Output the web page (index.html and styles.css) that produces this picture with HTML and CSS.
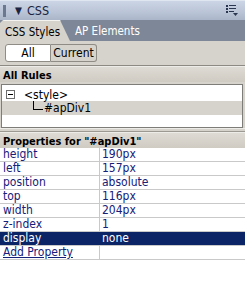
FILE: index.html
```html
<!DOCTYPE html>
<html>
<head>
<meta charset="utf-8">
<link rel="stylesheet" href="styles.css">
</head>
<body>
<div class="panel">
  <div class="titlebar">
    <span class="grip"></span>
    <span class="arrow">▼</span>
    <span class="title">CSS</span>
    <svg class="menu" width="12" height="11" viewBox="0 0 12 11">
      <rect x="0" y="0" width="2" height="2" fill="#2a3550"/>
      <rect x="3" y="0" width="7" height="1" fill="#2a3550"/>
      <rect x="0" y="3" width="2" height="2" fill="#2a3550"/>
      <rect x="3" y="3" width="7" height="1" fill="#2a3550"/>
      <rect x="0" y="6" width="2" height="2" fill="#2a3550"/>
      <rect x="3" y="6" width="5" height="1" fill="#2a3550"/>
      <path d="M7 8 L12 8 L9.5 11 Z" fill="#2a3550"/>
    </svg>
  </div>
  <div class="tabs">
    <div class="tab active">CSS Styles</div>
    <div class="tab">AP Elements</div>
  </div>
  <div class="toolbar">
    <div class="seg">
      <span class="btn on">All</span>
      <span class="btn">Current</span>
    </div>
  </div>
  <div class="header">All Rules</div>
  <div class="treewrap">
    <div class="tree">
      <div class="node">
        <span class="minus"></span>
        <span class="label">&lt;style&gt;</span>
      </div>
      <div class="node child">
        <span class="elbow"></span>
        <span class="label">#apDiv1</span>
      </div>
    </div>
  </div>
  <div class="sep"></div>
  <div class="header props">Properties for "#apDiv1"</div>
  <div class="rows">
    <div class="row"><span class="k">height</span><span class="v">190px</span></div>
    <div class="row"><span class="k">left</span><span class="v">157px</span></div>
    <div class="row"><span class="k">position</span><span class="v">absolute</span></div>
    <div class="row"><span class="k">top</span><span class="v">116px</span></div>
    <div class="row"><span class="k">width</span><span class="v">204px</span></div>
    <div class="row"><span class="k">z-index</span><span class="v">1</span></div>
    <div class="row sel"><span class="k">display</span><span class="v">none</span></div>
    <div class="row"><span class="k add">Add Property</span><span class="v"></span></div>
  </div>
</div>
</body>
</html>
```
FILE: styles.css
```css
html, body {
  margin: 0;
  padding: 0;
  background: #ffffff;
}
body {
  font-family: "DejaVu Sans Condensed", "DejaVu Sans", sans-serif;
  font-stretch: condensed;
  font-size: 11px;
  width: 245px;
  height: 284px;
  overflow: hidden;
}
.panel {
  display: flex;
  flex-direction: column;
}
.titlebar {
  height: 20px;
  box-sizing: border-box;
  border-top: 1px solid #dfe6f0;
  background: linear-gradient(#cbd5e5, #b9c4d6 60%, #aab5c9);
  display: flex;
  align-items: center;
  padding-left: 3px;
  color: #1b2440;
}
.grip {
  width: 3px;
  height: 12px;
  margin-right: 9px;
  background-image: radial-gradient(circle, #6c7890 0.8px, transparent 1px);
  background-size: 2px 2px;
}
.arrow {
  font-size: 10px;
  margin-right: 5px;
  font-family: "DejaVu Sans", sans-serif;
}
.title {
  font-size: 12.5px;
  flex: 1;
}
.menu {
  margin-right: 7px;
}
.tabs {
  height: 21px;
  background: #7d8797;
  display: flex;
  align-items: flex-end;
}
.tab {
  height: 21px;
  box-sizing: border-box;
  padding: 4px 0 0 5px;
  font-size: 11.5px;
  color: #ffffff;
}
.tab.active {
  width: 70px;
  background: #d6d3cc;
  color: #000000;
  clip-path: polygon(0 3px, 2px 1px, 4px 0, 60px 0, 100% 100%, 0 100%);
  border-top: 1px solid #f4f3ef;
}
.tab + .tab {
  padding-left: 5px;
}
.toolbar {
  height: 25px;
  background: #d6d3cc;
  box-sizing: border-box;
  padding: 3px 0 0 5px;
  border-bottom: 1px solid #8d8a84;
}
.seg {
  display: flex;
}
.btn {
  height: 18px;
  box-sizing: border-box;
  border: 1px solid #8f8c86;
  font-size: 12px;
  display: flex;
  align-items: center;
  justify-content: center;
  color: #000;
}
.btn.on {
  width: 46px;
  background: #ffffff;
  border-radius: 3px 0 0 3px;
}
.btn + .btn {
  width: 46px;
  border-left: 0;
  border-radius: 0 3px 3px 0;
  background: #d6d3cc;
}
.header {
  height: 16px;
  box-sizing: border-box;
  background: linear-gradient(#dedbd4, #cfcbc3);
  font-weight: bold;
  font-size: 11px;
  padding: 2px 0 0 3px;
  color: #000;
  border-top: 1px solid #eeece8;
}
.treewrap {
  background: #d6d3cc;
  padding: 2px 2px 0 1px;
}
.tree {
  height: 44px;
  box-sizing: border-box;
  border: 1px solid #7f7d78;
  background: #ffffff;
  padding-top: 3px;
}
.node {
  height: 13px;
  display: flex;
  align-items: center;
  font-size: 12px;
  color: #000;
}
.minus {
  width: 9px;
  height: 9px;
  box-sizing: border-box;
  border: 1px solid #6d6d6d;
  margin: 0 9px 0 4px;
  position: relative;
  background: #fff;
}
.minus::after {
  content: "";
  position: absolute;
  left: 1px;
  top: 3px;
  width: 5px;
  height: 1px;
  background: #000;
}
.child {
  background: #d6d3cc;
  height: 14px;
}
.elbow {
  width: 10px;
  height: 9px;
  box-sizing: border-box;
  border-left: 1px solid #000;
  border-bottom: 1px solid #000;
  margin: -6px 1px 0 31px;
}
.sep {
  height: 4px;
  background: #d6d3cc;
  border-top: 1px solid #eeece8;
  border-bottom: 1px solid #9c9992;
  box-sizing: border-box;
}
.rows {
  display: flex;
  flex-direction: column;
}
.row {
  height: 14px;
  display: grid;
  grid-template-columns: 100px 1fr;
  border-bottom: 1px solid #c9c9c9;
  box-sizing: border-box;
  color: #14207a;
  font-size: 12px;
  line-height: 13px;
}
.row .k {
  padding-left: 3px;
  border-right: 1px solid #c9c9c9;
}
.row .v {
  padding-left: 2px;
}
.row.sel {
  background: #0b2466;
  color: #ffffff;
}
.row.sel .k {
  border-right-color: #0b2466;
}
.add {
  text-decoration: underline;
}
```
